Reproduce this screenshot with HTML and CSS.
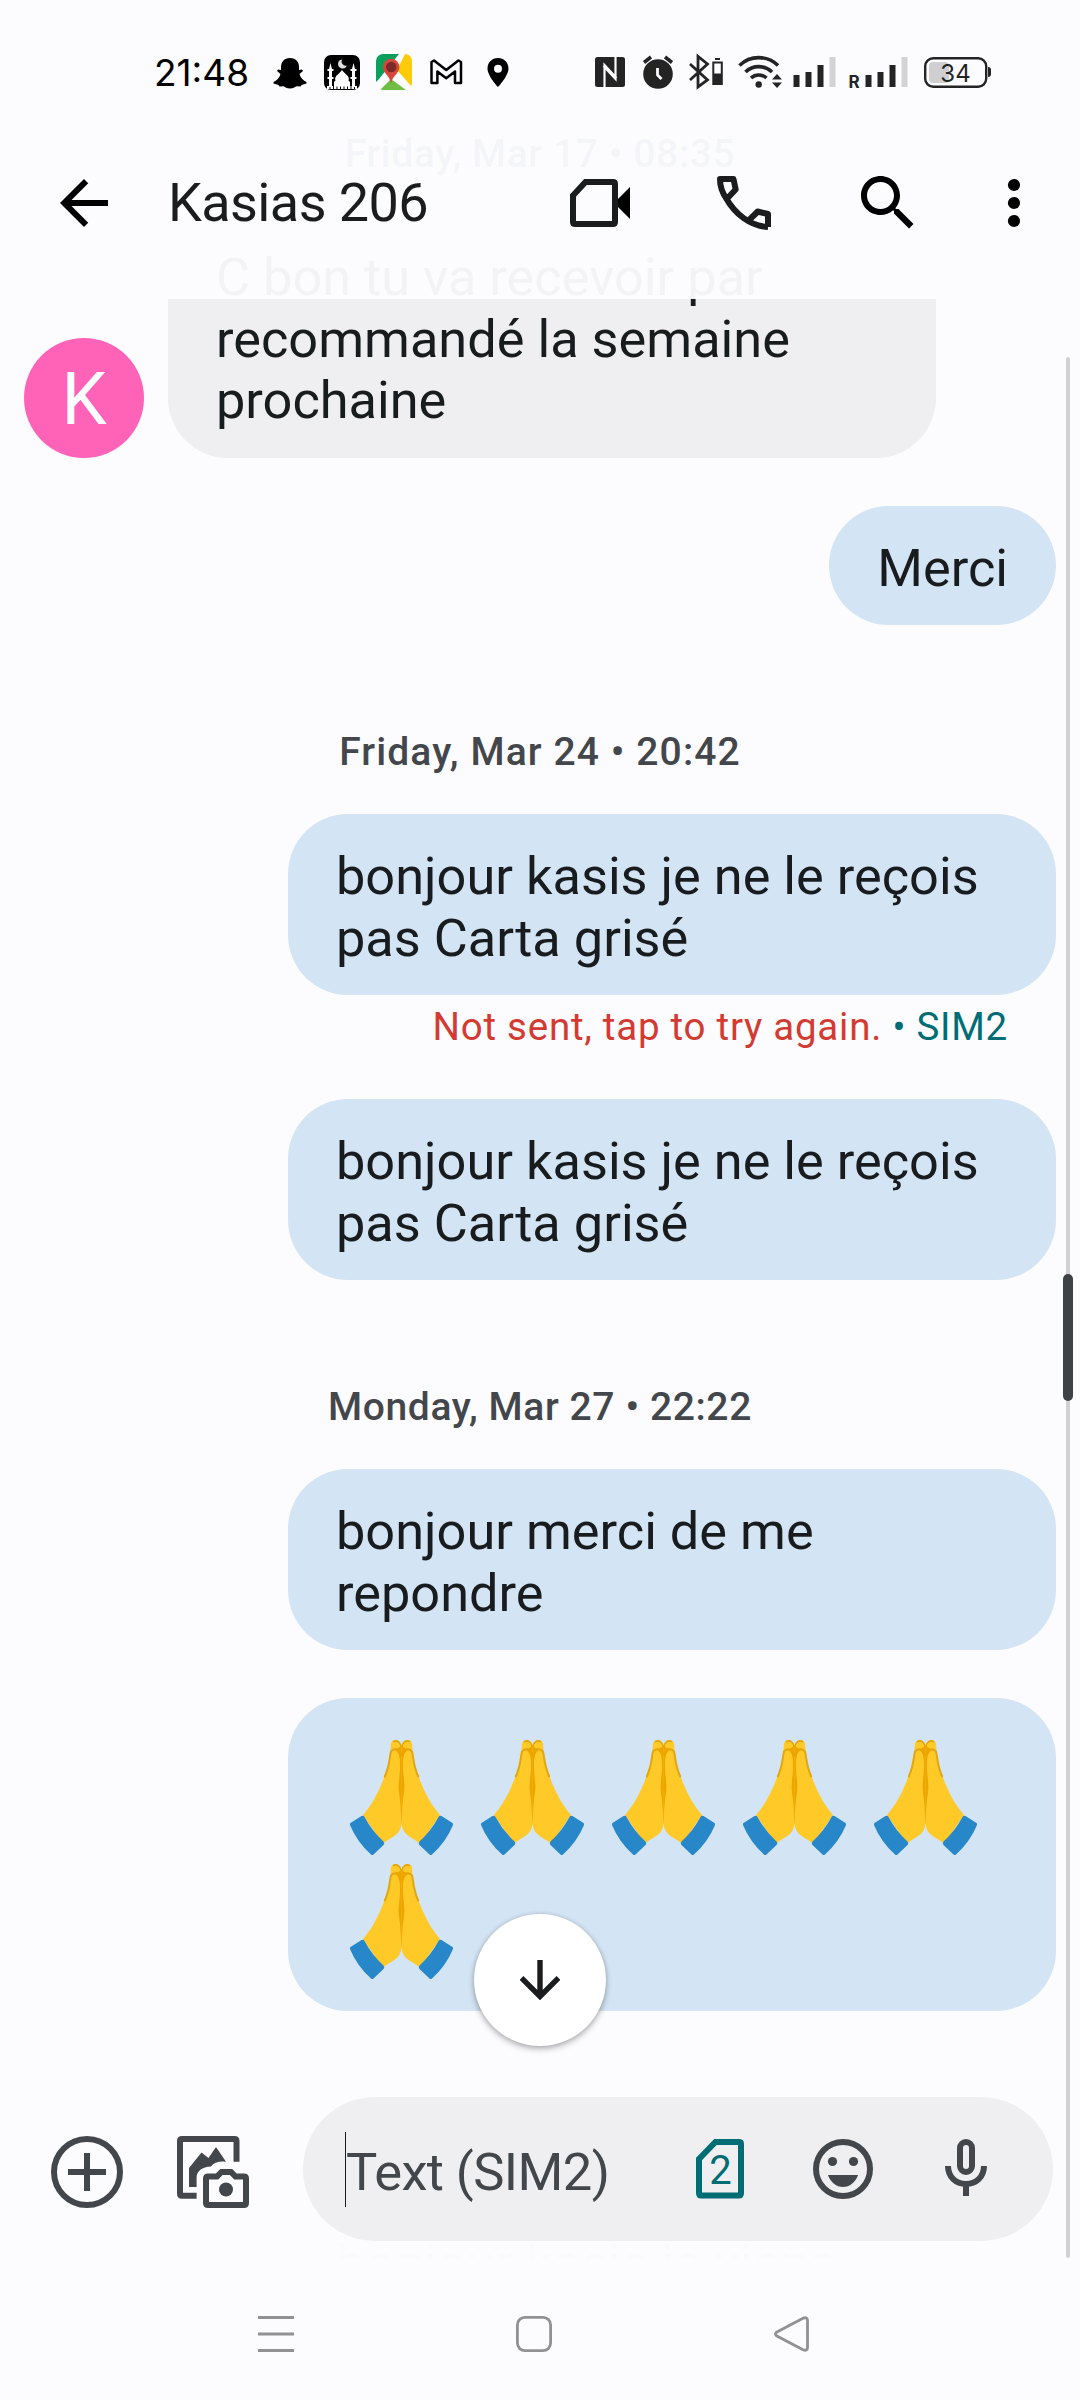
FILE: index.html
```html
<!DOCTYPE html>
<html lang="en">
<head>
<meta charset="utf-8">
<title>Kasias 206</title>
<link rel="stylesheet" href="styles.css">
</head>
<body>
<svg class="defs" width="0" height="0" aria-hidden="true">
  <symbol id="pray" viewBox="0 0 131 124">
    <g id="hand">
      <path d="M65.500 91V13C65 9 62 7 59.500 7Q54.800 7.500 54.800 12C54.500 25 52 36 47.500 46C43 58 36 72 27 82L47 111C53 104 64 104 65.500 91Z" fill="#ffca28"/>
      <path d="M48.800 43.500C54 32 53.500 24 55 18.500Q57 15.500 61 16.500Q64 17.500 65.500 22" fill="none" stroke="#e2a610" stroke-width="2" stroke-linecap="round"/>
      <path d="M57 8.800C61 6.500 64 9 65.500 14" fill="none" stroke="#e2a610" stroke-width="1.600"/>
      <path d="M65.700 12V91C65 91 65.200 73 63.200 61C61.500 51 64 44 64 34C64 26 64 20 59 17C62 15 63.500 14.500 65.700 12Z" fill="#eda600"/>
      <path d="M14.500 90L25.500 83Q27.500 82 28.500 84Q36 98 47.500 108.500Q49 110.500 47.500 112L37.500 121.500Q36.300 122.500 35 121.500Q21 109 14 92Q13.700 90.700 14.500 90Z" fill="#2787c8"/>
    </g>
    <use href="#hand" transform="matrix(-1 0 0 1 131 0)"/>
  </symbol>
</svg>

<div class="phone">
  <main class="thread">
    <p class="date first">Friday, Mar 17 • 08:35</p>
    <div class="row in">
      <div class="avatar">K</div>
      <div class="bubble">C bon tu va recevoir par recommandé la semaine prochaine</div>
    </div>
    <div class="row"><div class="bubble">Merci</div></div>
    <p class="date wide">Friday, Mar 24 • 20:42</p>
    <div class="row"><div class="bubble">bonjour kasis je ne le reçois pas Carta grisé</div></div>
    <p class="failed">Not sent, tap to try again. <span class="sim">• SIM2</span></p>
    <div class="row"><div class="bubble">bonjour kasis je ne le reçois pas Carta grisé</div></div>
    <p class="date">Monday, Mar 27 • 22:22</p>
    <div class="row"><div class="bubble">bonjour merci de me repondre</div></div>
    <div class="row">
      <div class="bubble emojis">
        <svg><use href="#pray"/></svg><svg><use href="#pray"/></svg><svg><use href="#pray"/></svg><svg><use href="#pray"/></svg><svg><use href="#pray"/></svg><svg><use href="#pray"/></svg>
      </div>
    </div>
    <div class="row under"><div class="bubble">bonjour kasie je viens</div></div>
  </main>

  <header class="top">
    <div class="status">
      <span class="clock">21:48</span>
      <svg class="apps" width="240" height="44" viewBox="270 50 240 44">
        <path d="M290 58c6 0 9 4 9 9v3l3-.5 1 1.500-3.500 3c1 4 4 6.500 7 8v1.500l-5 1.500-1 1.500-4-.2c-2 .8-3 2.200-6.500 2.200s-4.500-1.400-6.500-2.200l-4 .2-1-1.500-5-1.500v-1.500c3-1.500 6-4 7-8l-3.500-3 1-1.500 3 .5v-3c0-5 3-9 9-9z"/>
        <rect x="324" y="55" width="36" height="35" rx="7"/>
        <path d="M334 86.500v-4.500l1.500-1.500c-2-4.500 4.500-7 6.500-10.500 2 3.500 8.500 6 6.500 10.500l1.500 1.500v4.500zM329 87V69l1.500-6 1.500 6v18zM352 87V69l1.500-6 1.500 6v18z" fill="#fff"/>
        <path d="M327.500 78h6M327.500 70h6M350.500 78h6M350.500 70h6" stroke="#fff" stroke-width="2"/>
        <path d="M327 87.500h30" stroke="#fff" stroke-width="3" stroke-dasharray="2.500 1"/>
        <path d="M342 59.500a4.500 4.500 0 1 0 4.800 6a4.200 4.200 0 0 1-4.800-6z" fill="#ddd"/>
        <clipPath id="map"><rect x="376" y="54" width="36" height="36" rx="7"/></clipPath>
        <g clip-path="url(#map)">
          <path fill="#fff" d="M376 54h36v36h-36z"/>
          <path fill="#0aa05c" d="M376 54h23l-20 25-3 3z"/>
          <path fill="#fecb0b" d="M405 54h7v33l-15-17z"/>
          <path fill="#72bd44" d="M380 90l11-11 15 11z"/>
        </g>
        <path d="M391 83.500c-1-8-8-10-8-16.500a8.200 8.200 0 0 1 16.400 0c0 6.500-7 8.500-8.400 16.500z" fill="#d6483d"/>
        <circle cx="391.200" cy="67" r="5.200" fill="#7c2a28"/>
        <path d="M431.500 83V62l2.500-1.500 12.200 9.500 12.200-9.500L461 62v21h-6V71.500l-8.800 6.800-8.800-6.800V83z" fill="none" stroke="#000" stroke-width="2.500" stroke-linejoin="round"/>
        <path fill-rule="evenodd" d="M498 58c-6 0-10.500 4.500-10.500 10.500C487.500 76 498 87 498 87s10.500-11 10.500-18.500C508.500 62.500 504 58 498 58zm0 6.700a4 4 0 1 1 0 8 4 4 0 0 1 0-8z"/>
      </svg>
      <svg class="system" width="400" height="44" viewBox="592 50 400 44" fill="#242424">
        <rect x="595" y="57" width="30" height="30" rx="2.500"/>
        <path d="M604.500 87V65l12 13M615.500 57v22l-12-13" fill="none" stroke="#fcfcff" stroke-width="2.200"/>
        <circle cx="658" cy="74" r="14.800"/>
        <path d="M644 62.500l7-5.500M672 62.500l-7-5.500" stroke="#242424" stroke-width="3.500"/>
        <path d="M657.500 68v7l4 4" fill="none" stroke="#fcfcff" stroke-width="2.800"/>
        <path d="M690 64l17.500 16L698 87V56.500l9.500 7.500L690 80" fill="none" stroke="#242424" stroke-width="2.800"/>
        <path d="M715 59h5M713.300 62.500h8.500v21.500h-8.500z" fill="none" stroke="#242424" stroke-width="2"/>
        <path d="M713 73.500h9v11h-9z"/>
        <g fill="none" stroke="#242424" stroke-width="3.600"><path d="M739.500 65.500a27.500 27.500 0 0 1 38.500 0M745.500 72a19 19 0 0 1 26.500 0M751 78a11.500 11.500 0 0 1 15.500 0"/></g>
        <circle cx="758.700" cy="84.500" r="3.200"/>
        <path d="M772 79.500l5-5.500 5 5.500zM772 82.500h10l-5 5.500z"/>
        <path d="M793.500 75h6v12h-6zM805.500 72h6v15h-6zM817.500 65h6v22h-6zM865.500 75h6v12h-6zM877.500 72h6v15h-6zM889.500 65h6v22h-6z"/>
        <path d="M829.500 57h6v30h-6zM901.500 57h6v30h-6z" fill="#d3d3d5"/>
        <text x="848.500" y="88" font-size="17" font-weight="700">R</text>
        <rect x="929" y="62" width="20" height="21" rx="4" fill="#cfcfd1"/>
        <rect x="925.200" y="58.200" width="61" height="28.600" rx="8" fill="none" stroke="#242424" stroke-width="2.400"/>
        <path d="M988 67q3 0 3 3v4q0 3-3 3z"/>
        <text x="955.500" y="81.500" font-size="24" text-anchor="middle">34</text>
      </svg>
    </div>
    <div class="bar">
      <svg width="72" height="72" viewBox="0 0 24 24"><path d="M20 11H7.830l5.590-5.590L12 4l-8 8 8 8 1.410-1.410L7.830 13H20z"/></svg>
      <h1>Kasias 206</h1>
      <div class="actions">
        <svg width="72" height="72" viewBox="564 167 72 72"><path d="M573 195.500L585.500 182H613q2 0 2 2v38q0 2-2 2h-38q-2 0-2-2z" fill="none" stroke="#1b1c1e" stroke-width="6"/><path d="M618 199l12-12v32l-12-12z"/></svg>
        <svg width="72" height="72" viewBox="708 167 72 72" fill="none" stroke="#1b1c1e" stroke-width="6" stroke-linejoin="round"><path d="M720 179h13.500l2.200 10.500-9 9.500C721.500 192 720 185 720 179zM768 227v-13l-10.500-2.500-9.500 9.500M726 198C735 214 750 226 768 227M748 221L758 211.500"/></svg>
        <svg width="72" height="72" viewBox="0 0 24 24"><path d="M15.500 14h-.79l-.28-.27C15.410 12.590 16 11.110 16 9.500 16 5.910 13.090 3 9.500 3S3 5.910 3 9.500 5.910 16 9.500 16c1.610 0 3.090-.59 4.230-1.570l.27.28v.79l5 4.990L20.490 19l-4.990-5zm-6 0C7.010 14 5 11.990 5 9.500S7.010 5 9.500 5 14 7.010 14 9.500 11.990 14 9.500 14z"/></svg>
        <svg width="36" height="72" viewBox="0 0 36 72"><circle cx="18" cy="18" r="6.100"/><circle cx="18" cy="36" r="6.100"/><circle cx="18" cy="54" r="6.100"/></svg>
      </div>
    </div>
  </header>

  <div class="scroll"><div class="thumb"></div></div>
  <div class="fab"><svg width="40" height="40" viewBox="0 0 40 40"><path d="M20 0v36M1.500 18L20 36.500 38.500 18" fill="none" stroke="#1b1c1e" stroke-width="5.400"/></svg></div>

  <footer class="bottom">
    <div class="compose">
      <svg width="72" height="72" viewBox="0 0 72 72" fill="none" stroke="#43474b" stroke-width="6"><circle cx="36" cy="36" r="33"/><path d="M36 17v38M17 36h38"/></svg>
      <svg class="gallery" width="72" height="72" viewBox="0 0 72 72" fill="#43474b"><path d="M19.600 59.700H5q-2 0-2-2V5q0-2 2-2h52.500q2 0 2 2v20.700" fill="none" stroke="#43474b" stroke-width="6"/><path d="M12 32l12.500-15.500 7 5.500 7.500-11 10 14.700q-11-1-15 4.800c-9 0-14.400 5-14.400 11V51H12z"/><path d="M31 40.500h9l4.500-4.500h9.500l4.500 4.500h8.500q2 0 2 2V67q0 2-2 2H31q-2 0-2-2V42.500q0-2 2-2z" fill="none" stroke="#43474b" stroke-width="6"/><circle cx="49" cy="53.500" r="7"/></svg>
      <div class="field">
        <span class="hint">Text (SIM2)</span>
        <svg width="48" height="60" viewBox="0 0 48 60"><path d="M3 20L19.500 3H43q2 0 2 2v49q0 2.500-2 2.500H5q-2 0-2-2.500z" fill="none" stroke="#006d74" stroke-width="6"/><text x="24.500" y="45" font-size="40" text-anchor="middle" fill="#006d74">2</text></svg>
        <svg class="smile" width="60" height="60" viewBox="0 0 60 60" fill="#43474b"><circle cx="30" cy="30" r="27" fill="none" stroke="#43474b" stroke-width="6"/><circle cx="19.500" cy="22.500" r="4.600"/><circle cx="40.500" cy="22.500" r="4.600"/><path d="M15 36h30c-2.500 7.500-8.500 12-15 12s-12.500-4.500-15-12z"/></svg>
        <svg class="mic" width="42" height="60" viewBox="0 0 42 60" fill="none" stroke="#43474b" stroke-width="6"><rect x="15" y="3" width="12" height="30" rx="6"/><path d="M3 27c0 11 8 18 18 18s18-7 18-18M21 45v12"/></svg>
      </div>
    </div>
    <nav class="nav">
      <svg width="36" height="36" viewBox="0 0 36 36"><path d="M0 1.500h36M0 18h36M0 34.500h36"/></svg>
      <svg width="36" height="36" viewBox="0 0 36 36"><rect x="1.400" y="1.400" width="33.200" height="33.200" rx="7.500"/></svg>
      <svg width="36" height="36" viewBox="0 0 36 36"><path d="M2.500 16.200L29 2.300Q33.500.500 33.500 4.500V31.500Q33.500 35.500 29 33.700L2.500 19.800Q.500 18 2.500 16.200z"/></svg>
    </nav>
  </footer>
</div>
</body>
</html>
```
FILE: styles.css
```css
* { box-sizing: border-box; }
body { margin: 0; background: #fcfcff; font-family: Roboto, sans-serif; color: #1b1c1e; }
svg { display: block; flex: none; }
.defs { position: absolute; }
.phone { position: relative; width: 1080px; height: 2400px; overflow: hidden; background: #fcfcff; }

/* Conversation: scrolls beneath the translucent header and footer */
.thread { display: flex; flex-direction: column; gap: 48px; height: 2259px; overflow: hidden; padding: 130px 24px 0; }
.date { margin: 53px 0 -6px; height: 46px; line-height: 53px; font-size: 39px; font-weight: 500; letter-spacing: .6px; text-align: center; color: #43474b; }
.date.first { margin: 0 0 -9px; line-height: 49px; }
.date.wide { letter-spacing: 1.100px; }
.row { display: flex; justify-content: flex-end; align-items: flex-end; }
.row.in { justify-content: flex-start; gap: 24px; }
.bubble { max-width: 768px; padding: 32px 48px 26px; border-radius: 60px; background: #d3e4f4; font-size: 52.300px; line-height: 61.500px; color: #191c1e; }
.in .bubble { background: #efeff1; }
.avatar { display: flex; align-items: center; justify-content: center; width: 120px; height: 120px; padding-top: 3px; border-radius: 50%; background: #ff63b8; color: #fff; font-size: 72px; }
.failed { margin: -44px 48px 0 0; height: 52px; line-height: 55px; text-align: right; font-size: 38.500px; letter-spacing: .75px; color: #d33b32; }
.sim { color: #006d74; }
.emojis { display: flex; flex-wrap: wrap; align-content: flex-start; width: 768px; height: 313px; padding: 35px 48px 0; }
.emojis svg { width: 131px; height: 124px; }
.under { margin-top: 142px; }
.under .bubble { width: 768px; height: 181px; }

.top { position: absolute; top: 0; left: 0; width: 1080px; height: 299px; background: rgba(252, 252, 255, .96); }
.status { display: flex; height: 94px; padding: 50px 0 0 154px; align-items: flex-start; }
.clock { width: 116px; height: 44px; font: 37px/46px Inter, sans-serif; color: #000; }
.system { margin-left: 82px; font-family: Inter, sans-serif; }
.bar { display: flex; align-items: center; height: 72px; margin-top: 73px; padding-left: 48px; }
.bar h1 { flex: 1; margin: 0 0 0 48px; font-size: 54px; font-weight: 400; line-height: 72px; letter-spacing: -.6px; white-space: nowrap; }
.actions { display: flex; gap: 72px; padding-right: 48px; }

.scroll { position: absolute; right: 10px; top: 357px; width: 4px; height: 1901px; border-radius: 2px; background: #d0d1d4; }
.thumb { position: absolute; left: -3px; top: 917px; width: 10px; height: 127px; border-radius: 5px; background: #3f4245; }
.fab { position: absolute; left: 474px; top: 1914px; width: 132px; height: 132px; border-radius: 50%; background: #fff; box-shadow: 0 3px 6px rgba(0, 0, 0, .28), 0 0 4px rgba(0, 0, 0, .12); display: flex; align-items: center; justify-content: center; }

.bottom { position: absolute; left: 0; top: 2097px; width: 1066px; height: 303px; background: rgba(252, 252, 255, .992); }
.compose { display: flex; align-items: center; height: 144px; padding: 0 13px 0 51px; }
.compose > svg { margin-top: 6px; }
.gallery { margin-left: 54px; }
.field { display: flex; align-items: center; flex: 1; height: 144px; margin-left: 54px; padding-left: 42px; border-radius: 72px; background: #efeff1; color: #43474b; }
.hint { width: 351px; height: 75px; border-left: 1px solid #1b1c1e; line-height: 80px; font-size: 52.500px; letter-spacing: -.600px; white-space: nowrap; }
.smile { margin-left: 69px; }
.mic { margin-left: 72px; }
.nav { display: flex; justify-content: space-between; padding: 75px 271px 0 258px; }
.nav { padding-right: 256px; }
.nav svg { fill: none; stroke: #919193; stroke-width: 2.800; }
```
